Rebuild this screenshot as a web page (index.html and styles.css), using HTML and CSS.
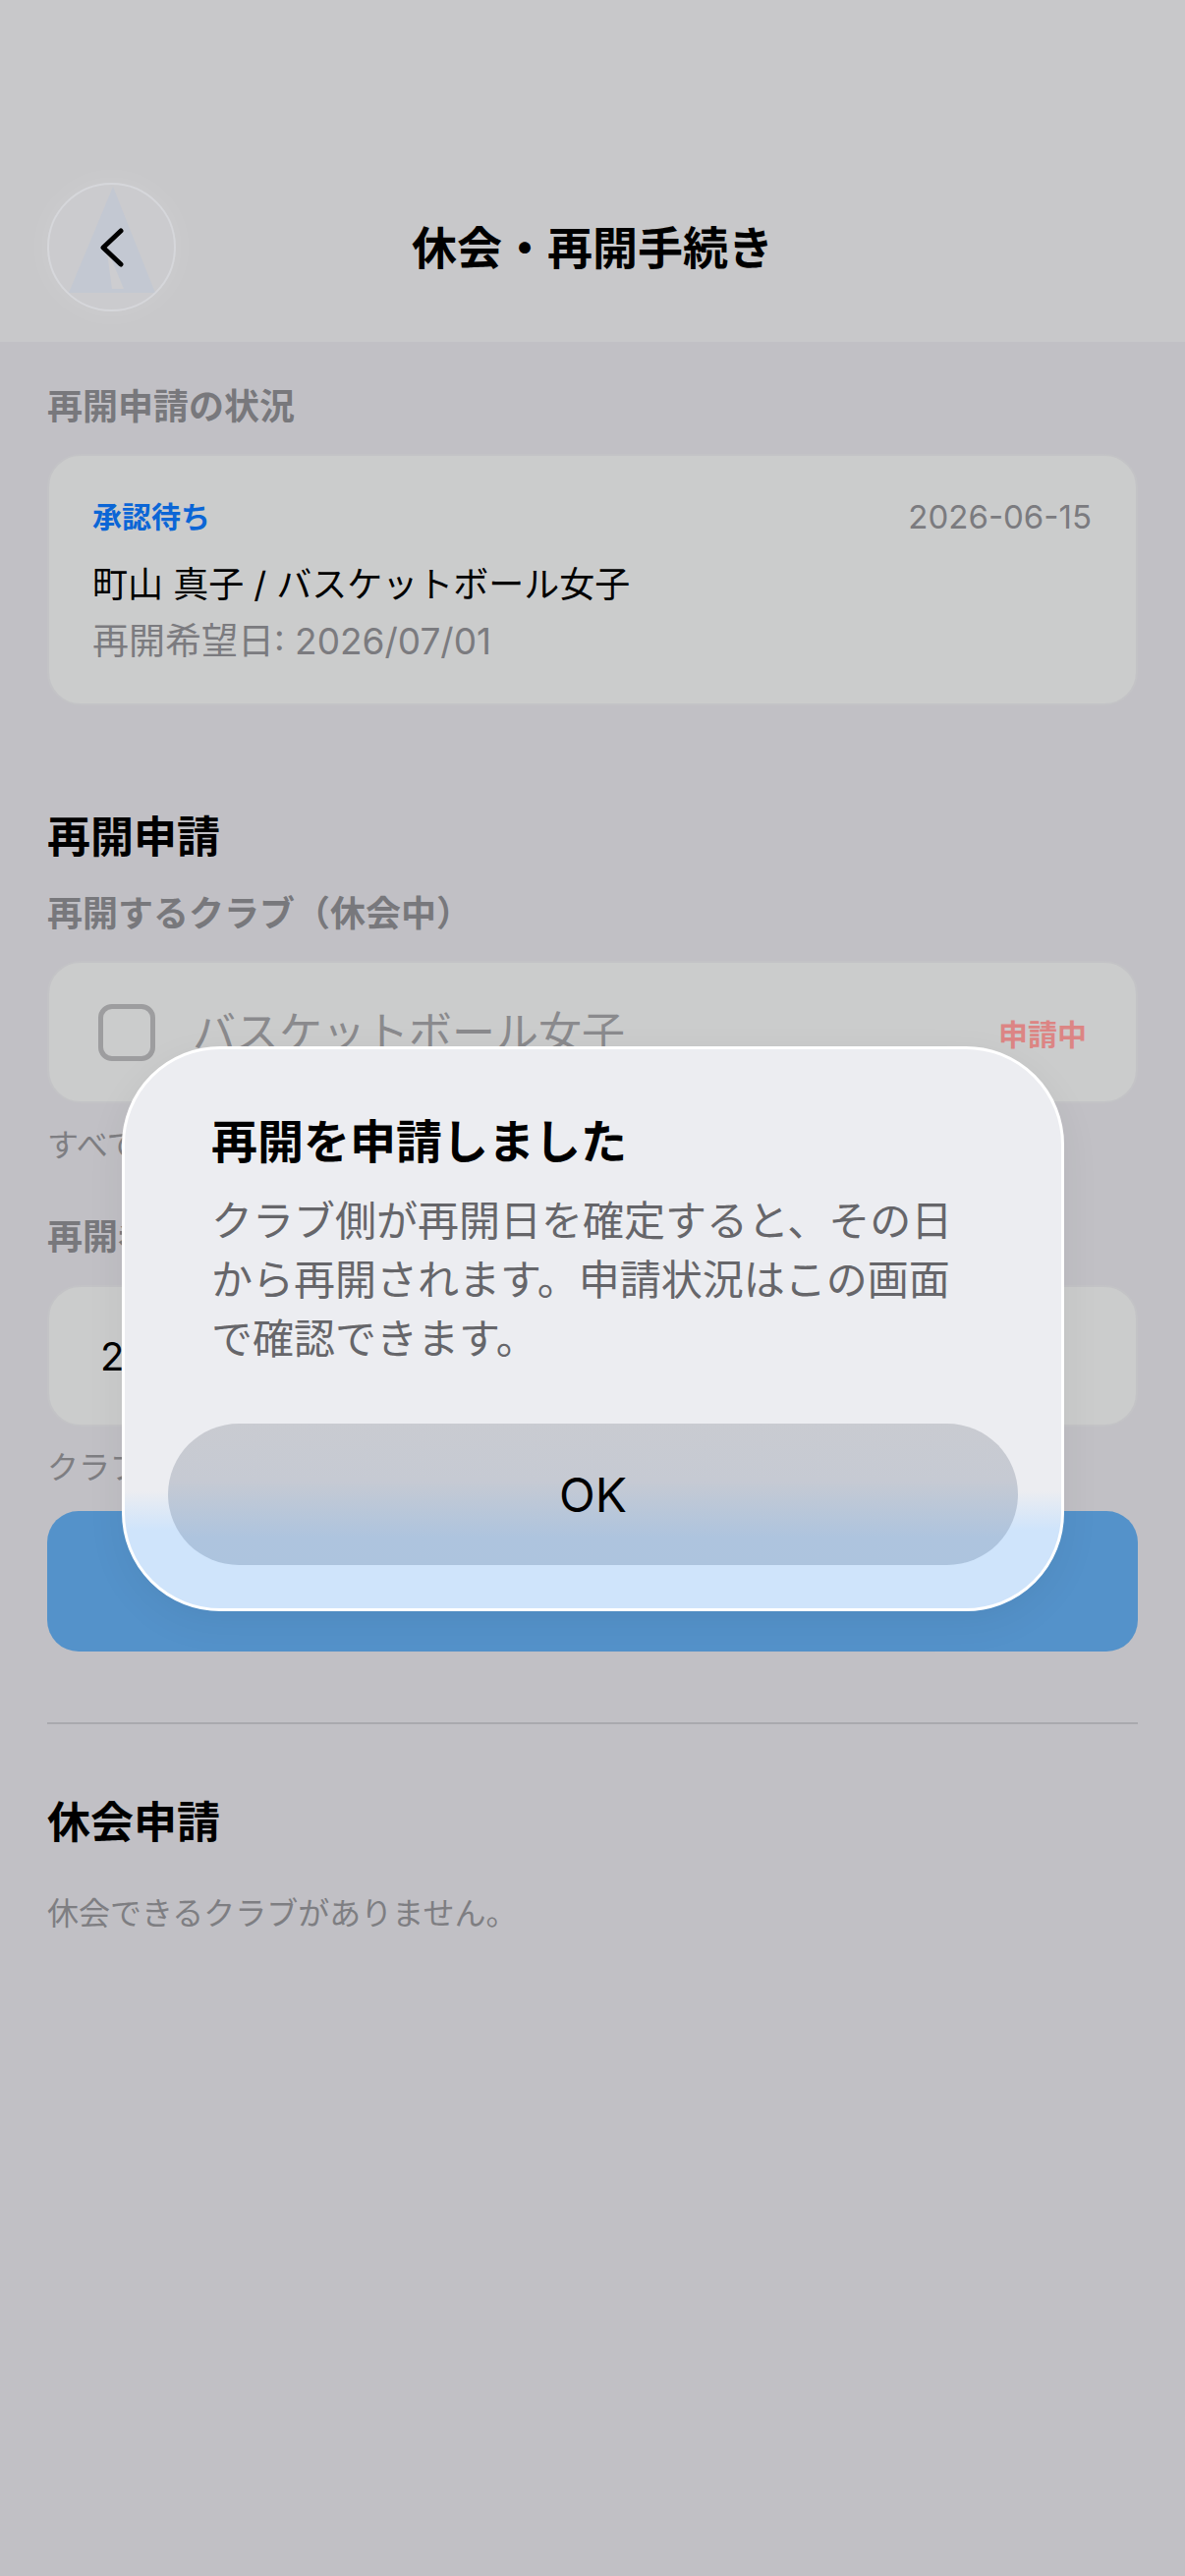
FILE: index.html
```html
<!DOCTYPE html>
<html lang="ja">
<head>
  <meta charset="UTF-8" />
  <meta name="viewport" content="width=device-width, initial-scale=1.0"/>
  <title>休会・再開手続き</title>
  <link rel="stylesheet" href="styles.css">
</head>
<body>
  <header class="topbar">
    <button class="back-btn" aria-label="戻る">
      <svg viewBox="0 0 131 131" width="131" height="131">
        <polygon class="glass" points="67,4 110,112 22,112"/>
        <polygon class="glass-cut" points="60,64 66,108 78,108 68,84"/>
        <polyline class="chevron" points="75,49 57,66 75,83"/>
      </svg>
    </button>
    <h1 class="title">休会・再開手続き</h1>
    <span class="spacer"></span>
  </header>

  <main class="content">
    <h2 class="label status-label">再開申請の状況</h2>
    <div class="card status-card">
      <div class="status-row">
        <span class="status">承認待ち</span>
        <span class="date">2026-06-15</span>
      </div>
      <div class="status-name">町山 真子 / バスケットボール女子</div>
      <div class="status-sub">再開希望日: 2026/07/01</div>
    </div>

    <h2 class="section-title resume-title">再開申請</h2>
    <h3 class="label club-label">再開するクラブ（休会中）</h3>
    <div class="card club-row">
      <span class="checkbox"></span>
      <span class="club-name">バスケットボール女子</span>
      <span class="pending">申請中</span>
    </div>
    <p class="hint club-hint">すべてのクラブが申請中です。</p>

    <h3 class="label date-label">再開希望日</h3>
    <div class="card date-field">2026/07/01</div>
    <p class="hint date-hint">クラブ側の承認後に再開日が確定します。</p>
    <button class="primary-btn">再開を申請する</button>

    <hr class="divider">

    <h2 class="section-title pause-title">休会申請</h2>
    <p class="hint pause-hint">休会できるクラブがありません。</p>
  </main>

  <div class="dialog" role="alertdialog">
    <h2 class="dialog-title">再開を申請しました</h2>
    <p class="dialog-body">クラブ側が再開日を確定すると、その日から再開されます。申請状況はこの画面で確認できます。</p>
    <button class="dialog-btn">OK</button>
  </div>
</body>
</html>
```

FILE: styles.css
```css
*{margin:0;padding:0;box-sizing:border-box;}
body{
  width:1206px; min-height:2622px; position:relative;
  background:#c1c0c5; color:#000;
  font-family:Inter,"Noto Sans CJK JP",sans-serif;
}
button{font-family:inherit;cursor:pointer;}

/* header */
.topbar{
  height:348px; background:#c8c8ca;
  display:grid; grid-template-columns:131px 1fr 131px; align-items:center;
  padding:186px 48px 31px;
}
.back-btn{
  width:131px; height:131px; border-radius:50%;
  background:#cbcbce; border:2px solid #d6d7db; overflow:hidden;
  box-shadow:0 0 30px rgba(255,255,255,0.12);
  display:flex; align-items:center; justify-content:center;
}
.back-btn svg{display:block;flex:none;}
.back-btn .glass{fill:#c3c8d2;}
.back-btn .glass-cut{fill:#cdcdd0;}
.back-btn .chevron{fill:none;stroke:#000;stroke-width:5;stroke-linecap:round;stroke-linejoin:round;}
.title{font-size:46px; font-weight:700; line-height:1; text-align:center;}

/* content */
.content{padding:0 48px;}
.label{font-size:36px; font-weight:700; color:#78787c; line-height:50px;}
.section-title{font-size:44px; font-weight:700; line-height:60px;}
.hint{font-size:32px; color:#7e7e82; line-height:44px;}
.card{background:#cbcccc; border:2px solid #c3c3c6; border-radius:34px;}

.status-label{margin-top:41px;}
.status-card{margin-top:23px; padding:42px 45px 40px 44px;}
.status-row{display:flex; justify-content:space-between; align-items:center; line-height:40px; margin-bottom:25px;}
.status{font-size:30px; font-weight:700; color:#0b66d6;}
.date{font-size:33px; color:#7b7b7f;}
.status-name{font-size:36px; line-height:48px; margin-bottom:11px;}
.status-sub{font-size:37px; line-height:46px; color:#7b7b7f;}

.resume-title{margin-top:104px;}
.club-label{margin-top:23px;}
.club-row{
  margin-top:23px; height:145px;
  display:flex; align-items:center; padding:0 50px;
}
.checkbox{width:58px; height:58px; border:5px solid #9d9d9f; border-radius:14px; flex:none;}
.club-name{flex:1; margin-left:38px; font-size:44px; line-height:1; color:#8a8a8d;}
.pending{font-size:30px; font-weight:700; color:#dc8584;}
.club-hint{margin-top:21px;}

.date-label{margin-top:46px;}
.date-field{
  margin-top:24px; height:144px;
  display:flex; align-items:center; padding-left:52px;
  font-size:40px;
}
.date-hint{margin-top:20px;}
.primary-btn{
  display:block; width:100%; height:143px; margin-top:22px;
  border:none; border-radius:32px; background:#5492ca;
  color:#fff; font-size:40px; font-weight:700;
}

.divider{margin-top:72px; border:none; height:2px; background:#a9a9ae;}
.pause-title{margin-top:70px;}
.pause-hint{margin-top:41px;}

/* dialog */
.dialog{
  position:absolute; top:1065px; left:124px; width:959px; height:575px;
  border:3px solid #fff; border-radius:100px;
  background:linear-gradient(#ecedf1 0%, #ecedf1 79%, #cfe4fb 86%, #cfe4fb 100%);
  padding:0 44px 44px;
  display:flex; flex-direction:column;
  box-shadow:0 12px 40px rgba(0,0,0,0.06);
}
.dialog-title{padding:64px 44px 0; font-size:47px; font-weight:700; line-height:60px;}
.dialog-body{margin-top:21px; padding:0 44px; font-size:42px; line-height:60px; color:#66666a;}
.dialog-btn{
  margin-top:56px; height:144px; border:none; border-radius:72px;
  background:linear-gradient(#c9cbd1 0%, #c6cad3 40%, #aec4de 80%, #adc4de 100%);
  font-size:48px; color:#000;
}
```
